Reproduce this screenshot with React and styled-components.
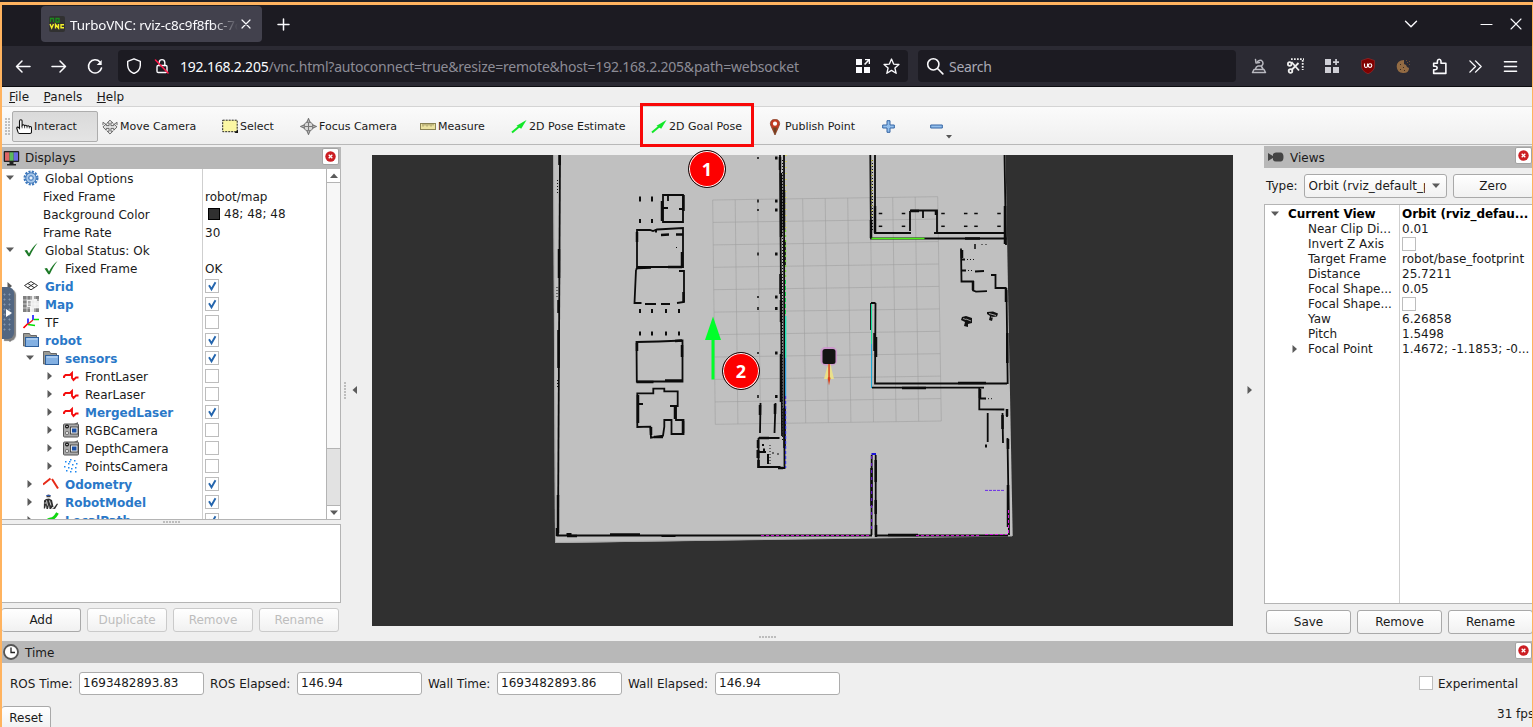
import React from "react";
import styled, { createGlobalStyle, css } from "styled-components";

const Global = createGlobalStyle`
  * { box-sizing: border-box; }
  body { margin: 0; overflow: hidden; background: #efefef; }
`;

const UI = `"DejaVu Sans", sans-serif`;
const CHROME = `"Noto Sans", "Open Sans", sans-serif`;

/* ---------- window frame ---------- */
const Desktop = styled.div`
  width: 1533px; height: 727px; overflow: hidden; position: relative;
  background: #202025; padding-top: 2px; font: 12px/18px ${UI}; color: #1a1a1a;
`;
const Frame = styled.div`
  height: 725px; border: solid #ffb35f; border-width: 3px 1px 0 2px;
  display: flex; flex-direction: column; background: #efefef; overflow: hidden;
`;

/* ---------- browser chrome ---------- */
const TabBar = styled.div`
  height: 41px; flex: none; background: #1c1b22; display: flex; align-items: flex-start;
  padding: 1px 10px 0 39px; color: #fbfbfe; font-family: ${CHROME};
`;
const Tab = styled.div`
  width: 221px; height: 36px; border-radius: 4px; background: #42414d;
  display: flex; align-items: center; padding: 0 8px;
`;
const TabTitle = styled.div`
  width: 168px; margin: 0 3px 0 5px; overflow: hidden; white-space: nowrap; font-size: 13.4px; letter-spacing: -0.15px; padding-top: 1px;
  mask-image: linear-gradient(to right, #000 142px, transparent 168px);
`;
const NewTab = styled.div`margin: 12px auto 0 15px; height: 13px; display: flex;`;
const WindowButtons = styled.div`display: flex; align-items: center; height: 36px; gap: ${p => p.$gap || 0}px;`;
const NavBar = styled.div`
  height: 41px; flex: none; background: #2b2a33; border-bottom: 1px solid #0c0c10;
  display: flex; align-items: center; padding: 0 14px 0 12px; font-family: ${CHROME};
`;
const NavButtons = styled.div`display: flex; gap: 18px; width: 104px; align-items: center;`;
const Field = styled.div`
  height: 32px; width: ${p => p.$w}px; border-radius: 4px; background: #1c1b22; display: flex; align-items: center;
  padding: 0 8px; margin-right: ${p => p.$mr}px; font-size: 14px; color: #a2a2aa; white-space: nowrap;
`;
const Url = styled.span`flex: 1; margin-left: 10px; padding-top: 1px; letter-spacing: -0.22px; color: #8c8c96; b { font-weight: 400; color: #fbfbfe; }`;
const SearchLabel = styled.span`margin-left: 5px; padding-top: 1px; color: #a9a9b5; letter-spacing: -0.3px;`;
const Extensions = styled.div`flex: 1; display: flex; justify-content: space-between; align-items: center;`;

/* ---------- rviz menus and tool bar ---------- */
const MenuBar = styled.div`
  height: 20px; flex: none; display: flex; gap: 14.5px; padding-left: 7px; line-height: 20px;
  border-bottom: 1px solid #d4d4d4;
`;
const ToolBar = styled.div`
  height: 38px; flex: none; display: flex; align-items: center; padding: 2px 0 0 3px; font-size: 11px;
  background: linear-gradient(#fbfbfb, #efefef); border-bottom: 1px solid #b8b8b8;
`;
const Grip = styled.div`
  width: ${p => p.$w || 5}px; height: ${p => p.$h || 18}px; opacity: ${p => p.$o || 0.7};
  background: radial-gradient(circle at 1px 1px, #a5a5a5 0.7px, transparent 0.9px) 0 0 / 3px 3px;
`;
const Tool = styled.div`
  width: ${p => p.$w}px; height: 31px; display: flex; align-items: center; gap: 2px; padding-left: 3px; white-space: nowrap;
  border: 1px solid transparent; border-radius: 2px;
  ${p => p.$on && css`border-color: #adadad; background: linear-gradient(#dadada, #e4e4e4); margin-left: 1px;`}
  svg { flex: none; }
`;
const ToolName = styled.span`padding-top: 1px;`;
const MenuMark = styled.svg`margin: 20px 0 0 4px;`;

/* ---------- docks ---------- */
const Body = styled.div`height: 496px; flex: none; display: flex;`;
const DisplaysDock = styled.div`width: 339px; flex: none; padding-top: 2px;`;
const DockTitle = styled.div`
  height: 22px; background: #b8b8b8; display: flex; align-items: center; padding: 0 ${p => p.$pr || 0}px 0 ${p => p.$pl ?? 1}px;
  svg:first-child { flex: none; }
`;
const TitleText = styled.span`flex: 1; margin-left: ${p => p.$ml || 6}px; line-height: 20px; padding-top: ${p => p.$down || 0}px;`;
const CloseBox = styled.div`
  width: 17px; height: 17px; margin-top: -3px; border: 1px solid #a4a4a4; border-radius: 2px; background: #fff;
  display: flex; align-items: center; justify-content: center; flex: none;
`;
const TreeFrame = styled.div`
  height: 351px; background: #fff; border: solid #b4b4b4; border-width: 0 1px 1px 0; display: flex; overflow: hidden;
`;
const TreeRows = styled.div`flex: 1;`;
const Row = styled.div`display: flex; height: 18px; line-height: 18px; white-space: nowrap;`;
const NameCell = styled.div`
  width: 201px; border-right: 1px solid #cfcfcf; display: flex; align-items: center;
  padding-left: ${p => p.$level * 20 + 4}px; color: ${p => (p.$active ? "#2a78c8" : "#1a1a1a")}; font-weight: ${p => (p.$active ? 700 : 400)};
`;
const Expander = styled.span`
  width: 17px; display: flex; flex: none;
`;
const Label = styled.span`margin-left: ${p => (p.$plain ? 0 : 6)}px; padding-top: 2px;`;
const ValueCell = styled.div`padding-left: 2px; display: flex; align-items: center;`;
const ValueText = styled.span`padding-top: ${p => (p.$flat ? 0 : 2)}px;`;
const Swatch = styled.span`width: 12px; height: 12px; margin: 0 4px 0 3px; background: #303030; border: 1px solid #000;`;
const CheckFrame = styled.span`
  width: 14px; height: 14px; border: 1px solid #bdbdbd; background: #fff; display: flex; flex: none;
`;
const ScrollBar = styled.div`
  width: 14px; border-left: 1px solid #b4b4b4; display: flex; flex-direction: column; background: #f7f7f7;
`;
const ScrollEnd = styled.div`height: 14px; display: flex; align-items: center; justify-content: center; background: #fff; border: solid #b4b4b4; border-width: ${p => (p.$top ? "0 0 1px" : "1px 0 0")};`;
const Thumb = styled.div`height: 57px; margin-top: auto; background: #e2e2e2; border-top: 1px solid #b4b4b4;`;
const Splitter = styled.div`height: 4px; display: flex; align-items: center; justify-content: center;`;
const Description = styled.div`height: 79px; background: #fff; border: solid #b4b4b4; border-width: 1px 1px 1px 0;`;
const ButtonRow = styled.div`display: flex; gap: 6px; padding: ${p => p.$pad}; `;
const Button = styled.div`
  width: ${p => p.$w}px; height: 24px; flex: none; display: flex; align-items: center; justify-content: center;
  border: 1px solid ${p => (p.$off ? "#cacaca" : "#a9a9a9")}; border-radius: 3px; background: linear-gradient(#fff, #f1f1f1);
  color: ${p => (p.$off ? "#bdbdbd" : "#1a1a1a")}; ${p => p.$flat && "border-left: 0;"}
`;
const SideHandle = styled.div`width: ${p => p.$w}px; flex: none; display: flex; align-items: center; gap: 5px; padding: 0 0 6px ${p => p.$pl}px;`;
const ViewColumn = styled.div`width: 861px; flex: none; padding-top: 10px; display: flex; flex-direction: column; align-items: center;`;
const ViewSplit = styled.div`padding: 10px 70px 0 0;`;
const Scene = styled.svg`display: block; width: 861px; height: 471px; background: #303030;`;

const ViewsDock = styled.div`width: 268px; flex: none; padding-top: 1px; overflow: hidden;`;
const TypeRow = styled.div`display: flex; align-items: center; height: 36px; padding: 0 0 0 2px;`;
const Combo = styled.div`
  width: 143px; height: 24px; margin: 0 6px 0 6px; flex: none; border: 1px solid #a9a9a9; border-radius: 3px; background: linear-gradient(#fff, #f1f1f1);
  display: flex; align-items: center; justify-content: space-between; padding: 0 6px 0 4px;
`;
const Clip = styled.span`width: 116px; overflow: hidden; white-space: nowrap;`;
const ViewsTree = styled.div`
  width: 280px; height: 400px; border: 1px solid #b4b4b4; background: #fff; display: flex; padding-top: 1px;
`;
const ViewsNames = styled.div`width: 135px; flex: none; border-right: 1px solid #cfcfcf; margin-top: -1px; padding-top: 1px;`;
const ViewsValues = styled.div`padding-left: 2px; width: 132px;`;
const ViewsLine = styled.div`
  height: 15px; line-height: 16px; white-space: nowrap; display: flex; align-items: center;
  padding-left: ${p => p.$pl || 0}px; font-weight: ${p => (p.$b ? 700 : 400)}; color: ${p => (p.$b ? "#000" : "#1a1a1a")};
  letter-spacing: ${p => (p.$b ? -0.05 : 0)}px;
  > span:last-child { padding-top: 1px; }
`;

const TimeDock = styled.div`height: 86px; flex: none;`;
const TimeRow = styled.div`display: flex; align-items: center; height: 40px; padding: 0 14px 0 8px; white-space: nowrap;`;
const TimeLabel = styled.span`width: ${p => p.$w}px; padding-top: 1px;`;
const TimeInput = styled.div`
  width: 125px; height: 23px; line-height: 21px; border: 1px solid #adadad; border-radius: 3px; background: #fff; padding-left: 3px; margin-right: 6px;
`;
const Experimental = styled.div`margin-left: auto; display: flex; align-items: center; gap: 5px; > span:last-child { padding-top: 1px; }`;
const StatusRow = styled.div`display: flex; justify-content: space-between; padding-top: 3px; height: 24px; > span { width: 35px; white-space: nowrap; line-height: 17px; }`;

/* ---------- overlays ---------- */
const VncHandle = styled.div`
  position: absolute; left: 2px; top: 287px; width: 12px; height: 52px; border-radius: 0 6px 6px 0; background: #526681;
  box-shadow: 2px 2px 1px #808080; display: flex; align-items: center; padding-left: 1px;
`;
const HandleDots = styled.div`
  width: 10px; height: 40px; background: radial-gradient(circle at 1.5px 1.5px, #8496ae 0.9px, transparent 1.1px) 0 0 / 5px 5px;
`;
const HandleMark = styled.svg`margin-left: -7px; flex: none;`;
const Highlight = styled.div`
  position: absolute; left: 640px; top: 103px; width: 114px; height: 44px; border: 3px solid #f80808;
`;
const Step = styled.div`
  position: absolute; left: ${p => p.$x - 19}px; top: ${p => p.$y - 19}px; width: 38px; height: 38px; border-radius: 50%;
  border: 1px solid #111; background: #fd0000; box-shadow: inset 0 0 0 1px #fff; color: #fff; font: 700 18px/37px "Open Sans", sans-serif; text-align: center;
`;
const Gap = styled.span`width: 12px; flex: none;`;

/* ---------- small drawings ---------- */
const Line = ({ w = 16, h = w, vb = "0 0 16 16", c = "#fbfbfe", sw = 1.4, d, children }) => (
  <svg width={w} height={h} viewBox={vb} fill="none" stroke={c} strokeWidth={sw} strokeLinecap="round" strokeLinejoin="round">
    {d && <path d={d} />}{children}
  </svg>
);
const Triangle = ({ dir = "right", c = "#5b5b5b", s = 8 }) => {
  const d = { right: "M1.500 0l4.500 4-4.500 4z", left: "M6 0L1.500 4l4.500 4z", down: "M0 1.500h8L4 6z", up: "M0 6h8L4 1.500z" }[dir];
  return <svg width={s} height={s} viewBox="0 0 8 8"><path d={d} fill={c} /></svg>;
};
const Check = ({ on }) => (
  <CheckFrame>{on && <svg width="12" height="12" viewBox="0 0 12 12"><path d="M3 5.3L5.5 9.3 9.5 2.3" fill="none" stroke="#2465ad" strokeWidth="1.9" /></svg>}</CheckFrame>
);
const Close = () => (
  <CloseBox>
    <svg width="11" height="11" viewBox="0 0 11 11"><circle cx="5.5" cy="5.5" r="5.2" fill="#cc1d22" /><path d="M3.7 3.7l3.6 3.6M7.3 3.7L3.7 7.3" stroke="#fff" strokeWidth="1.3" /></svg>
  </CloseBox>
);
const GreenArrow = () => (
  <svg width="16" height="16" viewBox="0 0 16 16"><path d="M1 13.500L10 6" stroke="#12e828" strokeWidth="2" /><path d="M15.500 1L5.500 6.700l4.700 3z" fill="#12e828" /></svg>
);
const icons = {
  gear: <svg width="16" height="16" viewBox="0 0 16 16"><circle cx="8" cy="8" r="6" fill="none" stroke="#3d78bd" strokeWidth="3" strokeDasharray="2 1.14" /><circle cx="8" cy="8" r="5.2" fill="#a9c8ea" stroke="#4a80be" strokeWidth="1" /><circle cx="8" cy="8" r="2.4" fill="none" stroke="#4a80be" /><circle cx="8" cy="8" r="1" fill="#fff" /></svg>,
  ok: <svg width="16" height="16" viewBox="0 0 16 16"><path d="M1.500 8.500L4 8l2 3.500C8.500 7 11 3.500 14.500 1 11.500 5 9 9.500 6.800 14.200H5.300z" fill="#1e7a28" /></svg>,
  grid: <svg width="16" height="16" viewBox="0 0 16 16" fill="none" stroke="#333" strokeWidth="1"><path d="M1.500 7.500L8 3.500l6.500 4L8 11.800zM4.800 5.500l6.500 4.200M11.200 5.500L4.800 9.700" /></svg>,
  map: <svg width="16" height="16" viewBox="0 0 16 16"><path d="M0 0h16v16H0z" fill="#ececec" /><path d="M0 0h4v16H0zM4 0h5v4H4zM11 0h5v5h-2V3h-3zM4 11h3v5H4zM11 12h5v4h-5z" fill="#808080" /><path d="M5 5h3v5H5z" fill="#aaa" /><path d="M4 0v16M8 0v16M12 0v16M0 4h16M0 8h16M0 12h16" stroke="#fff" strokeWidth=".6" /></svg>,
  tf: <svg width="16" height="16" viewBox="0 0 16 16" fill="none" strokeWidth="1.600"><path d="M5 9.500L.5 14" stroke="red" /><path d="M5 9.500V4.500M10 6V1" stroke="#1414ff" /><path d="M5 10.500l7 1M11 5.500h5" stroke="#0d0" /><path d="M10 6L5 10" stroke="#e22" /></svg>,
  folder: <svg width="16" height="16" viewBox="0 0 16 16"><path d="M.5 14V1.500h6l1 2h6V14z" fill="#9a9a94" stroke="#666" /><rect x="2.500" y="5.500" width="13" height="9" fill="#83b0e2" stroke="#2d5f9c" /><path d="M3.500 7h11" stroke="#b5d3f3" strokeWidth="1.500" /></svg>,
  laser: <svg width="16" height="16" viewBox="0 0 16 16"><path d="M1 10V8.500L2.500 7H7L9 5v5l1.500 2L13 9.500h2.500" fill="none" stroke="#f40d0d" strokeWidth="1.900" /></svg>,
  camera: <svg width="16" height="16" viewBox="0 0 16 16"><path d="M11 2l4-2v4z" fill="#777" /><rect x=".5" y="2" width="15" height="13" rx="1" fill="#aaa" stroke="#555" /><circle cx="4" cy="4.500" r="2" fill="#111" /><circle cx="4" cy="4.500" r=".8" fill="#eee" /><circle cx="4" cy="11" r="1.700" fill="#ddd" stroke="#444" strokeWidth=".6" /><rect x="7.500" y="5" width="7.500" height="7" fill="#e8e8e8" stroke="#333" strokeWidth=".8" /><rect x="9" y="6.500" width="4.500" height="4" fill="#1c50a4" /></svg>,
  points: <svg width="16" height="16" viewBox="0 0 16 16"><path d="M7 1h1.500v1.500H7zM2 3h1.500v1.500H2zM11 2h1.500v1.500H11zM5 5h1.500v1.500H5zM9 6h1.500v1.500H9zM13 5h1.500v1.500H13zM1 8h1.500v1.500H1zM5 9h1.500v1.500H5zM12 9h1.500v1.500H12zM8 10h1.500v1.500H8zM3 12h1.500v1.500H3zM7 13h1.500v1.500H7zM12 13h1.500v1.500H12zM6 3h1.500v1.500H6z" fill="#1e88f0" /></svg>,
  odom: <svg width="16" height="16" viewBox="0 0 16 16"><path d="M0 8.500L7.500 2.500M9 3l6 9.500" stroke="#e62b18" strokeWidth="2" fill="none" /></svg>,
  robot: <svg width="16" height="16" viewBox="0 0 16 16"><path d="M3.500 1.200Q5.500 0 7.500 1.200v2h-4z" fill="#444" /><path d="M3.500 1.500h4" stroke="#2c59b8" strokeWidth="1" /><path d="M1 6.500l2-1.500 3-.5 3 1.500 1.500 7h-1L8 15H6.500L6 11l-1 4H3.500L3 11l-1 3.500H.8zM11 13.500l3-4 1 .5-3 5-3-.5z" fill="#2f2f2f" /><path d="M3.500 6.500l1 5M6.500 6.500l1.500 5M1.500 9h2" stroke="#d5d5d5" strokeWidth="1" /></svg>,
  path: <svg width="16" height="16" viewBox="0 0 16 16"><path d="M1 14Q4 7 7.500 7t7-6" fill="none" stroke="#13d613" strokeWidth="3" /></svg>,
};

/* ---------- the scene ---------- */
const corner = { tl: [712.7, 200], tr: [937.7, 196.7], bl: [715.3, 424.3], br: [941.3, 421] };
const mix = (a, b, t) => [a[0] + (b[0] - a[0]) * t, a[1] + (b[1] - a[1]) * t];
const gridPath = Array.from({ length: 11 }, (_, i) => {
  const t = i / 10;
  const seg = (a, b) => `M${a.map(n => n.toFixed(1)).join(" ")}L${b.map(n => n.toFixed(1)).join(" ")}`;
  return seg(mix(corner.tl, corner.tr, t), mix(corner.bl, corner.br, t)) + seg(mix(corner.tl, corner.bl, t), mix(corner.tr, corner.br, t));
}).join("");
const dots = [
  ...[640, 652].flatMap(x => [[x, 199, 2, 5], [x, 221, 2, 4]]),
  ...[640, 652, 666, 679].flatMap(x => [[x, 311, 2, 4], [x, 333.5, 2, 4]]),
  ...[158, 201, 210, 254, 297, 308.500, 353, 396.500].flatMap((y, i) => [[758, y, 1.500, 2 + (i % 2)], [776.300, y, 2.500, 3]]),
  ...[880.500, 903.500, 943, 965.700, 976, 999].flatMap(x => [[x, 213.500, 3.500, 1.500], [x, 226.300, 3.500, 1.500]]),
  [975, 246.500, 1.500, 5], [982, 244.500, 1, 1], [986, 244.500, 1, 1], [986, 446, 2, 3], [676.500, 247.500, 1, 1], [656, 231, 2, 3],
  [758, 454, 3, 8], [762, 452, 8, 2], [768, 459, 2, 10], [773, 453, 2, 1], [778, 454, 2, 1], [763, 445, 2, 2], [764, 450, 2, 3],
  [668.500, 536, 14, 2], [569, 534.500, 5, 3],
];
const thin = [
  "M560 155L558 535", "M1004.500 155l1.500 90M1006.500 290l1.200 94M1007 409v8M1007.500 438l1.500 97",
  "M663 195h20v27h-20zM637 230h13l3 1 4-1.500 26-1.500v39H637zM636 270l-1.500 33h7M645 304h11M661 304h9M677 303l7-1V271h-5M636 270l1-2",
  "M636.500 342l22-.5 24-1V381.500l-29 0H636.800z",
  "M637.300 427V393.300h16v-4.700h11v2.700h13.400v14.700h-1.700v14h7.500v14h-12V420h-7.200v6.700l-1.300 9-12 2-.7-11z",
  "M637 404h6M668 194v7M663 208h5M683 209h-4M670 406h6",
  "M780 155l2 281M784 155l0.500 313h-4.500", "M760.500 403l-.5 30M775.500 403l-1 30",
  "M758.500 438h21M758.500 438v29h22",
  "M870.300 155l.7 83.500h135.500M875 155v78h36M934 233h72", "M910 211v20M910 210.500h27v22M923 211v7",
  "M961 248.500l.5 33h11.500v9l3 1.200 11-.5M991 275h4.500v13h11", "M961 259.500h4M961 270.500h5M975 271.500l9-.5",
  "M871 303h4.500M871 303v27M875.500 303l-.5 80.500h132M872 387.700h112M979.300 388v21.300l25 .2M979 398.500h7",
  "M987.700 413v29M1002.500 413l.5 30", "M871.700 455l-.2 80M875.700 455v80", "M556.500 535.500H872M876 535.500h132",
];
const thick = [
  "M559.500 155v10M559 249v29M558.500 300v13M558.500 330v38M558 495v38M557 528v8",
  "M683.500 195v16M662 201v20M637 232v10M637 268l14-.5M668 267h14M682 252v16M683.500 292v10M661 235l8-.5M676 234.500h7",
  "M637 343v8M636.500 382h17M665 380.500h17M682 345v12M675 341l7-.5",
  "M638 395v28M651 427v8M683 421v12M675 407v12M654 437h9",
  "M780 157v13M781 173v64M784 190v40M780.500 274v20M781 354v48M784.500 408v40M783 468h-5M781 300v22M784.500 240v25",
  "M759 438h10M758 440v8M758.500 460v8M775 404v10M760 405v10",
  "M875 206v27M871 220v18M965 238.500h15M911 211h8M936 211v4M1005 206v38M1006 288v14",
  "M874.500 333v18M876 337v20M902 388h24M958 383h28M1007.300 333v30M1007 409v7M1008 439v10M1008 485v42M980 389v9M973 281v9M962 250v8M1002.500 415v14",
  "M871.500 468v38M875.700 460v22M875.700 500v14M876 525v12M888 535h30M610 534.500h30M567 536h10",
];
const MapScene = () => (
  <Scene viewBox="372 155 861 471">
    <path d="M553.300 155L555 543 1012.700 536 1005.500 155z" fill="#c0c0c0" />
    <path d="M553.500 155l2 388M555.500 542.500L1012 536" stroke="#a9a9a9" fill="none" strokeWidth="1" />
    <path d={gridPath} stroke="#a0a0a0" strokeOpacity=".75" strokeWidth=".8" fill="none" />
    <g stroke="#0b0b0b" fill="none" strokeWidth="1.800">{thin.map((d, i) => <path key={i} d={d} />)}</g>
    <g stroke="#0b0b0b" fill="none" strokeWidth="2.500">{thick.map((d, i) => <path key={i} d={d} />)}</g>
    <g fill="#0b0b0b">{dots.map(([x, y, w, h], i) => <rect key={i} x={x - w / 2} y={y - h / 2} width={w} height={h} />)}</g>
    <g fill="none" stroke="#111" strokeWidth="1" strokeDasharray="1 2"><path d="M964 259.500h11M965 270.500h9M782.500 160v280M872.500 160v70M557.500 180v13M557 287v12M557.500 380v8M985 398.700h8M770 445v22" /></g>
    <g fill="#111"><path d="M962 317l4-1 6 2v5l-4 1v3l-4-1 1-4-4-2zM987 312l6-.5 5 2-1 3-4 .5-1 4-3-1 1-4-3-2z" /></g>
    <path d="M966 319l5 2M989 313.500l7 2M963 318.500l3 1M991 317l3 .5" stroke="#c0c0c0" strokeWidth=".8" />
    <g fill="none" strokeWidth="1">
      <path d="M786 155v75" stroke="#e2e21a" strokeDasharray="1 5" />
      <path d="M785.700 230v50" stroke="#6be01c" strokeDasharray="2 3" />
      <path d="M785.500 280v36" stroke="#0fd64e" strokeDasharray="4 2" />
      <path d="M785.700 316v42" stroke="#17e8b8" strokeWidth="1.300" />
      <path d="M785.700 358v38" stroke="#11a0ef" />
      <path d="M785.700 396v72" stroke="#2727f2" strokeDasharray="3 2" />
      <path d="M872 160v60" stroke="#e2e21a" strokeDasharray="1 4" />
      <path d="M871.500 238.500h53" stroke="#4bf014" strokeWidth="1.500" />
      <path d="M871.500 304v40" stroke="#13e3a0" />
      <path d="M871.500 344v44" stroke="#19a9d6" />
      <path d="M871.500 454h4.500" stroke="#1c14d8" strokeWidth="2" />
      <path d="M871.700 456v76" stroke="#7a1cf0" strokeDasharray="3 4" />
      <path d="M985 490.400h20" stroke="#6a2be8" strokeDasharray="3 1" />
      <path d="M761 535.600h110M916 535.600h64M985 534.500h22M1008.500 510v24" stroke="#d416dc" strokeDasharray="3 2" />
    </g>
    <rect x="820.500" y="347" width="16.500" height="18.500" rx="5" fill="#cf8fd0" opacity=".8" />
    <rect x="822.500" y="349" width="13" height="15" rx="2.500" fill="#141414" />
    <path d="M828 364.500h2.500l3.500 14.500h-10z" fill="#e9e08b" /><path d="M828.300 364h1.500v13l.7 1-1.500 7.500-1.300-7.500.6-1z" fill="#d8421d" />
    <path d="M711.500 339h3V379.500h-3z" fill="#00ff2a" /><path d="M713 316.500L721 340h-16z" fill="#00ff2a" />
  </Scene>
);

/* ---------- data ---------- */
const displays = [
  { n: "Global Options", l: 0, i: "gear", e: "down" },
  { n: "Fixed Frame", l: 1, v: "robot/map" },
  { n: "Background Color", l: 1, v: "48; 48; 48", swatch: true },
  { n: "Frame Rate", l: 1, v: "30" },
  { n: "Global Status: Ok", l: 0, i: "ok", e: "down" },
  { n: "Fixed Frame", l: 1, i: "ok", v: "OK" },
  { n: "Grid", l: 0, i: "grid", e: "right", on: true, box: true },
  { n: "Map", l: 0, i: "map", e: "right", on: true, box: true },
  { n: "TF", l: 0, i: "tf", e: "right", box: true },
  { n: "robot", l: 0, i: "folder", e: "down", on: true, box: true },
  { n: "sensors", l: 1, i: "folder", e: "down", on: true, box: true },
  { n: "FrontLaser", l: 2, i: "laser", e: "right", box: true },
  { n: "RearLaser", l: 2, i: "laser", e: "right", box: true },
  { n: "MergedLaser", l: 2, i: "laser", e: "right", on: true, box: true },
  { n: "RGBCamera", l: 2, i: "camera", e: "right", box: true },
  { n: "DepthCamera", l: 2, i: "camera", e: "right", box: true },
  { n: "PointsCamera", l: 2, i: "points", e: "right", box: true },
  { n: "Odometry", l: 1, i: "odom", e: "right", on: true, box: true },
  { n: "RobotModel", l: 1, i: "robot", e: "right", on: true, box: true },
  { n: "LocalPath", l: 1, i: "path", e: "right", on: true, box: true },
];
const viewProps = [
  ["Near Clip Di...", "0.01"], ["Invert Z Axis", null], ["Target Frame", "robot/base_footprint"], ["Distance", "25.7211"],
  ["Focal Shape...", "0.05"], ["Focal Shape...", null], ["Yaw", "6.26858"], ["Pitch", "1.5498"], ["Focal Point", "1.4672; -1.1853; -0..."],
];
const times = [["ROS Time:", 69, "1693482893.83"], ["ROS Elapsed:", 87, "146.94"], ["Wall Time:", 69, "1693482893.86"], ["Wall Elapsed:", 87, "146.94"]];

const tools = [
  ["Interact", 86, <svg width="16" height="16" viewBox="0 0 16 16"><path d="M3.500 9.500V2.200Q3.500.7 4.800.7T6.100 2.200V6.500Q7.500 5 8.500 6.800 10 5.500 11 7.200 12.500 6 13.300 7.700 15.500 7 15.500 9v4q0 1.500-1.500 1.500H3.500Q2 14.500 1.800 12.500L.7 9Q1.500 7 3.500 9.500z" fill="#fff" stroke="#111" strokeWidth="1.100" /><path d="M6.100 6.500v2.800M8.600 7v2.300M11 7.500v1.800M13.300 8v1.500" stroke="#222" strokeWidth=".8" /></svg>],
  ["Move Camera", 120, <svg width="16" height="16" viewBox="0 0 17 16" fill="#e2e2e2" stroke="#555" strokeWidth=".9"><path d="M8.500.7l3 3h-2v2.800h3v-2l3.500 3.500-3.500 3.500v-2h-3v3h2l-3 3-3-3h2v-3h-3v2L1 8l3.500-3.500v2h3V3.700h-2z" /><path d="M1 3v3M4 5L1 3M13 5l3-2v3" /></svg>],
  ["Select", 78, <svg width="16" height="16" viewBox="0 0 16 16"><rect x=".7" y="1.200" width="14.500" height="11.500" fill="#fbf7a4" stroke="#222" strokeDasharray="2 1" /><path d="M16 10.500v3.500h-3.500z" fill="#111" /></svg>],
  ["Focus Camera", 120, <svg width="17" height="17" viewBox="0 0 16 16" fill="none" stroke="#777"><circle cx="8" cy="8" r="4.300" fill="#d8d8d8" /><path d="M8 .5L6.500 4h3zM8 15.500L6.500 12h3zM.5 8L4 6.500v3zM15.500 8L12 6.500v3z" fill="#ccc" /><path d="M8 4.500v7M4.500 8h7" /></svg>],
  ["Measure", 91, <svg width="16" height="16" viewBox="0 0 16 16"><rect x=".5" y="4.500" width="15" height="6" fill="#ebe2a0" stroke="#8b8355" /><path d="M3 4.500v3M5 4.500v2M7 4.500v3M9 4.500v2M11 4.500v3M13 4.500v2" stroke="#7b7348" strokeWidth=".8" /></svg>],
  ["2D Pose Estimate", 140, <GreenArrow />],
  ["2D Goal Pose", 116, <GreenArrow />],
  ["Publish Point", 115, <svg width="16" height="16" viewBox="0 0 16 16"><path d="M8 16L4.200 7.500C2 3.500 4.500.2 8 .2s6 3.300 3.800 7.300z" fill="#c23c22" stroke="#7a3a20" strokeWidth=".7" /><path d="M8 16L6 8.500h4z" fill="#6b4423" /><circle cx="8" cy="4.700" r="2.100" fill="#fff" /></svg>],
  ["", 48, <svg width="13" height="13" viewBox="0 0 13 13"><path d="M5 .7h3V5h4.300v3H8v4.300H5V8H.7V5H5z" fill="#93bfec" stroke="#3465a4" /></svg>],
  ["", 16, <svg width="13" height="13" viewBox="0 0 13 13"><path d="M.7 5h11.600v3H.7z" fill="#93bfec" stroke="#3465a4" /></svg>],
];

const LockOff = () => (
  <Line w={16}><rect x="3" y="7.500" width="10" height="7" rx="1.200" /><path d="M5.200 7.500V4.300Q5.500 1.600 8 1.600T10.800 4.300V7.500" /><path d="M1.500 2L14 15" stroke="#ff1a4b" strokeWidth="1.600" /></Line>
);

export default function App() {
  return (
    <Desktop>
      <Global />
      <Frame>
        <TabBar>
          <Tab>
            <svg width="16" height="16" viewBox="0 0 16 16"><rect width="16" height="16" rx="2" fill="#313131" /><path d="M1.500 6V2.500h3V6M7 2.500h3V6H7z" fill="none" stroke="#1b8a1b" strokeWidth="1.300" /><path d="M1 8l1.700 4L4.500 8M6.500 12.500V8.500l3 3.500V8M15 8.700h-3v3h3" fill="none" stroke="#f4f02a" strokeWidth="1.400" /></svg>
            <TabTitle>TurboVNC: rviz-c8c9f8fbc-7c</TabTitle>
            <Line w={10} vb="0 0 10 10" sw={1.2} d="M1 1l8 8M9 1L1 9" />
          </Tab>
          <NewTab><Line w={13} vb="0 0 13 13" sw={1.5} d="M6.500 1v11M1 6.500h11" /></NewTab>
          <WindowButtons $gap={62}>
            <Line w={14} h={8} vb="0 0 14 8" sw={1.4} d="M1.500 1.300L7 6.800l5.500-5.500" />
            <WindowButtons $gap={17}>
              <Line w={13} vb="0 0 13 13" sw={1.2} d="M1 6.500h11" />
              <Line w={12} vb="0 0 12 12" sw={1.1} d="M1 1l10 10M11 1L1 11" />
            </WindowButtons>
          </WindowButtons>
        </TabBar>
        <NavBar>
          <NavButtons>
            <Line w={18} vb="0 0 18 18" sw={1.5} d="M16 9.500H2.500M8 4L2.500 9.500 8 15" />
            <Line w={18} vb="0 0 18 18" sw={1.5} d="M2 9.500h13.500M10 4L15.500 9.500 10 15" />
            <Line w={18} vb="0 0 18 18" sw={1.6} d="M15.500 11A6.600 6.600 0 1 1 14 5"><path d="M15.700 3v5h-5z" fill="#fbfbfe" stroke="none" /></Line>
          </NavButtons>
          <Field $w={790} $mr={10}>
            <Line w={16} d="M8 .8L14.300 3.300V7.500Q14 13 8 15.500 2 13 1.700 7.500V3.300z" />
            <Gap /><LockOff />
            <Url><b>192.168.2.205</b>/vnc.html?autoconnect=true&amp;resize=remote&amp;host=192.168.2.205&amp;path=websocket</Url>
            <svg width="16" height="16" viewBox="0 0 16 16" fill="#fbfbfe"><path d="M1 1h6v6H1zM1 9h6v6H1zM9 9h6v6H9zM10 1h5v5h-1.300V3.300L10.200 7 9 5.900l3.600-3.600H10z" /></svg>
            <Gap />
            <Line w={17} sw={1.25} d="M8 1l2 4.700 5 .4-3.800 3.300 1.200 5L8 11.700l-4.400 2.700 1.200-5L1 6.100l5-.4z" />
          </Field>
          <Field $w={318} $mr={15}>
            <Line w={18} sw={1.4} d="M10.500 10.500L15 15"><circle cx="6.500" cy="6.500" r="5" /></Line>
            <SearchLabel>Search</SearchLabel>
          </Field>
          <Extensions>
            <Line w={16} c="#b9b9c0" sw={1.5} d="M1.500 14.500h13l-1.500-3H3zM4.500 11Q5 8.500 7 8h3.500Q13.500 5 10.500 2.500 8.500 1.500 6.500 3.500M4.500 1.500L5 5l3.500-.5M10.500 8.500l1.500 2.500" />
            <svg width="17" height="16" viewBox="0 0 17 16" fill="none" stroke="#eee" strokeWidth="1.800"><path d="M4 1.200h13M15.700 2v10" strokeDasharray="1.700 1.300" /><path d="M4.500 4L12 12.500M11.500 5L4.500 12" /><circle cx="2.700" cy="6" r="1.800" /><circle cx="3.500" cy="13" r="1.800" /></svg>
            <svg width="16" height="16" viewBox="0 0 16 16" fill="#cfcfd6"><path d="M1 1h6v6H1zM1 9h6v6H1zM9 9h6v6H9zM11.200 1h1.700v2.200H15v1.700h-2.100V7h-1.700V4.900H9V3.200h2.200z" /></svg>
            <svg width="16" height="16" viewBox="0 0 16 16"><path d="M8 .3l6.500 2.200V8q0 5-6.500 7.800Q1.500 13 1.500 8V2.500z" fill="#800000" stroke="#a33" strokeWidth=".5" /><path d="M4.500 5.500V8q.2 1.500 1.500 1.500T7.500 8V5.500" fill="none" stroke="#fff" strokeWidth="1.100" /><circle cx="10" cy="7.600" r="1.800" fill="none" stroke="#fff" strokeWidth="1.100" /></svg>
            <svg width="16" height="16" viewBox="0 0 16 16"><path d="M9 2Q2 2 1.700 8.500 2 14.700 8 15t6-5l-2-1-1-2-2-1z" fill="#936b43" /><path d="M5 6h1v1H5zM8 9h1v1H8zM5 11h1v1H5zM9 12h1v1H9z" fill="#3c2a1c" /><path d="M12 4h1v1h-1zM14 3h1v1h-1zM14 6h1v1h-1zM11 2h1v1h-1z" fill="#6b4e33" /></svg>
            <Line w={17} sw={1.5} d="M3 5h3V3q.2-1.800 1.700-1.800T9.400 3V5h4.600v9.500H2.500V11H4q1.800-.2 1.800-1.700T4 7.700H2.500V5" />
            <Line w={15} sw={1.5} d="M2 2l6 6-6 6M8 2l6 6-6 6" />
            <Line w={15} sw={1.5} d="M1.500 3h13M1.500 8h13M1.500 13h13" />
          </Extensions>
        </NavBar>
        <MenuBar><span><u>F</u>ile</span><span><u>P</u>anels</span><span><u>H</u>elp</span></MenuBar>
        <ToolBar>
          <Grip $w={6} />
          {tools.map(([name, w, icon], i) => <Tool key={i} $w={w} $on={i === 0}>{icon}<ToolName>{name}</ToolName></Tool>)}
          <MenuMark width="6" height="4" viewBox="0 0 6 4"><path d="M0 0h6L3 3.500z" fill="#555" /></MenuMark>
        </ToolBar>

        <Body>
          <DisplaysDock>
            <DockTitle $pr={2}>
              <svg width="17" height="16" viewBox="0 0 17 16"><rect x=".7" y="1" width="15.500" height="11" rx="1" fill="#222" /><path d="M2 2.300h4.500v8.400H2z" fill="#d66" /><path d="M6.500 2.300h4.200v8.400H6.500z" fill="#5dba5d" /><path d="M10.700 2.300H15v8.400h-4.300z" fill="#6a6ae0" /><path d="M6.500 12h4v2H13v1.500H4V14h2.500z" fill="#222" /></svg>
              <TitleText $ml={5}>Displays</TitleText><Close />
            </DockTitle>
            <TreeFrame>
              <TreeRows>
                {displays.map((r, i) => (
                  <Row key={i}>
                    <NameCell $level={r.l} $active={r.on}>
                      <Expander>{r.e && <Triangle dir={r.e} />}</Expander>
                      {r.i && icons[r.i]}
                      <Label $plain={!r.i}>{r.n}</Label>
                    </NameCell>
                    <ValueCell>{r.swatch && <Swatch />}{r.box && <Check on={r.on} />}{r.v && <ValueText $flat={r.swatch}>{r.v}</ValueText>}</ValueCell>
                  </Row>
                ))}
              </TreeRows>
              <ScrollBar><ScrollEnd $top><Triangle dir="up" /></ScrollEnd><Thumb /><ScrollEnd><Triangle dir="down" /></ScrollEnd></ScrollBar>
            </TreeFrame>
            <Splitter><Grip $w={17} $h={2} /></Splitter>
            <Description />
            <ButtonRow $pad="5px 0">
              <Button $w={79} $flat>Add</Button><Button $w={80} $off>Duplicate</Button><Button $w={80} $off>Remove</Button><Button $w={80} $off>Rename</Button>
            </ButtonRow>
          </DisplaysDock>
          <SideHandle $w={31} $pl={3}><Grip $w={2} $h={17} /><Triangle dir="left" /></SideHandle>
          <ViewColumn><MapScene /><ViewSplit><Grip $w={18} $h={3} /></ViewSplit></ViewColumn>
          <SideHandle $w={31} $pl={13}><Triangle dir="right" /></SideHandle>
          <ViewsDock>
            <DockTitle $pl={3}>
              <svg width="18" height="12" viewBox="0 0 18 12"><path d="M1 2l5 3V3q1-1.500 3-1.500h5q2.500.5 2.500 4.500T14 10.500H9Q7 10.500 6 9V7L1 10z" fill="#444" /></svg>
              <TitleText $ml={5} $down={2}>Views</TitleText><Close />
            </DockTitle>
            <TypeRow>
              Type:
              <Combo><Clip>Orbit (rviz_default_plugins)</Clip><Triangle dir="down" /></Combo>
              <Button $w={81}>Zero</Button>
            </TypeRow>
            <ViewsTree>
              <ViewsNames>
                <ViewsLine $b $pl={6}><Expander><Triangle dir="down" /></Expander><span>Current View</span></ViewsLine>
                {viewProps.map(([n], i) => <ViewsLine key={i} $pl={i === 8 ? 26 : 43}>{i === 8 && <Expander><Triangle /></Expander>}<span>{n}</span></ViewsLine>)}
              </ViewsNames>
              <ViewsValues>
                <ViewsLine $b><span>Orbit (rviz_defau...</span></ViewsLine>
                {viewProps.map(([, v], i) => <ViewsLine key={i}>{v === null ? <Check /> : <span>{v}</span>}</ViewsLine>)}
              </ViewsValues>
            </ViewsTree>
            <ButtonRow $pad="6px 2px"><Button $w={85}>Save</Button><Button $w={85}>Remove</Button><Button $w={85}>Rename</Button></ButtonRow>
          </ViewsDock>
        </Body>

        <TimeDock>
          <DockTitle>
            <svg width="16" height="16" viewBox="0 0 16 16"><circle cx="8" cy="8" r="7" fill="#fff" stroke="#555" strokeWidth="1.800" /><path d="M8 3.500V8.500h4" fill="none" stroke="#222" strokeWidth="1.300" /></svg>
            <TitleText $down={2}>Time</TitleText><Close />
          </DockTitle>
          <TimeRow>
            {times.map(([l, w, v]) => <React.Fragment key={l}><TimeLabel $w={w}>{l}</TimeLabel><TimeInput>{v}</TimeInput></React.Fragment>)}
            <Experimental><Check /><span>Experimental</span></Experimental>
          </TimeRow>
          <StatusRow><Button $w={49} $flat>Reset</Button><span>31 fps</span></StatusRow>
        </TimeDock>
      </Frame>
      <VncHandle><HandleDots /><HandleMark width="7" height="10" viewBox="0 0 7 10"><path d="M0 1l6 4-6 4z" fill="#fff" /></HandleMark></VncHandle>
      <Highlight />
      <Step $x={707} $y={169}>1</Step>
      <Step $x={741} $y={371}>2</Step>
    </Desktop>
  );
}
